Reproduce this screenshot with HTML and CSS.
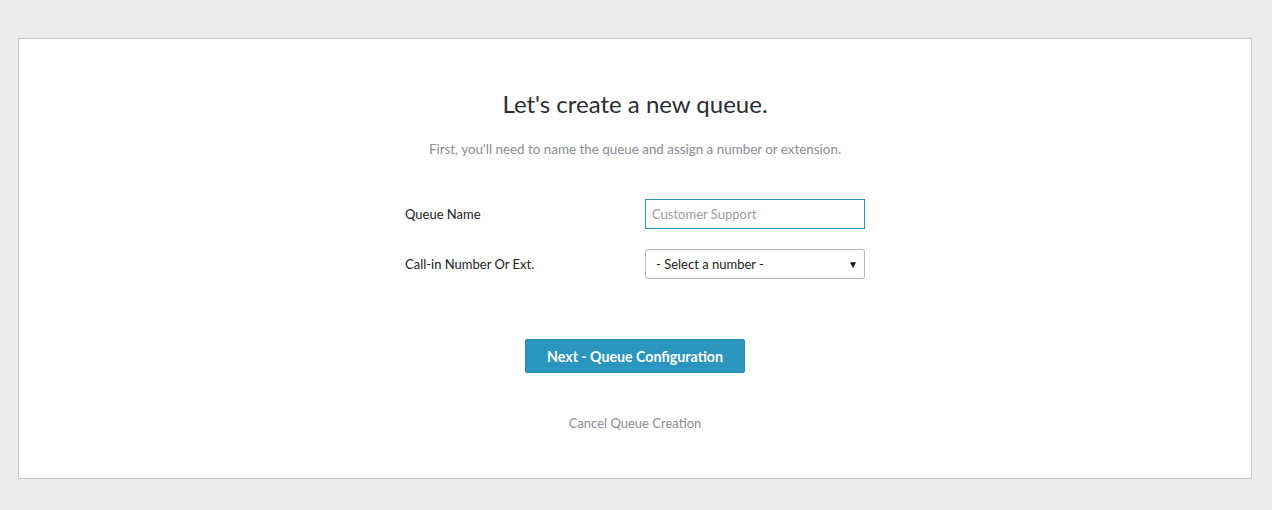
FILE: index.html
```html
<!DOCTYPE html>
<html lang="en">
<head>
<meta charset="utf-8">
<title>Create Queue</title>
<link rel="stylesheet" href="styles.css">
</head>
<body>
<div class="page">
  <div class="card">
    <h1 class="title">Let's create a new queue.</h1>
    <p class="subtitle">First, you'll need to name the queue and assign a number or extension.</p>
    <div class="form">
      <div class="row">
        <label class="label" for="qname">Queue Name</label>
        <input class="input" id="qname" type="text" placeholder="Customer Support">
      </div>
      <div class="row">
        <label class="label">Call-in Number Or Ext.</label>
        <div class="select">
          <span class="select-text">- Select a number -</span>
          <span class="select-arrow">▼</span>
        </div>
      </div>
    </div>
    <button class="btn" type="button">Next - Queue Configuration</button>
    <a class="cancel" href="#">Cancel Queue Creation</a>
  </div>
</div>
</body>
</html>
```
FILE: styles.css
```css
html, body {
  margin: 0;
  padding: 0;
  background: #ebebeb;
  font-family: Lato, "Open Sans", "Liberation Sans", sans-serif;
}
.page {
  padding: 38px 20px 31px 18px;
}
.card {
  background: #fff;
  border: 1px solid #c7c7cc;
  height: 439px;
  box-sizing: content-box;
  display: flex;
  flex-direction: column;
  align-items: center;
}
.title {
  margin: 50px 0 0;
  font-size: 24px;
  font-weight: 400;
  color: #2b2d33;
  line-height: 30px;
}
.subtitle {
  margin: 20px 0 0;
  font-size: 13.4px;
  color: #8a8d95;
  line-height: 20px;
}
.form {
  margin-top: 40px;
  width: 460px;
  display: flex;
  flex-direction: column;
  gap: 20px;
}
.row {
  display: flex;
  align-items: center;
  justify-content: space-between;
  height: 30px;
}
.label {
  font-size: 13px;
  color: #222;
}
.input {
  width: 220px;
  height: 30px;
  box-sizing: border-box;
  border: 1px solid #2a96c2;
  border-radius: 0;
  padding: 0 6px;
  font-family: inherit;
  font-size: 13px;
  color: #333;
  outline: none;
}
.input::placeholder {
  color: #9a9ca2;
}
.select {
  width: 220px;
  height: 30px;
  box-sizing: border-box;
  border: 1px solid #b8b8bc;
  border-radius: 3px;
  display: flex;
  align-items: center;
  justify-content: space-between;
  padding: 0 6px 0 10px;
  font-size: 13px;
  color: #222;
}
.select-arrow {
  font-size: 10px;
  color: #111;
}
.btn {
  margin-top: 60px;
  width: 220px;
  height: 34px;
  background: #2a96c0;
  border: 1px solid #2690bb;
  border-radius: 2px;
  color: #fff;
  font-family: inherit;
  font-size: 14.2px;
  font-weight: 700;
  padding: 0;
}
.cancel {
  margin-top: 42px;
  font-size: 13px;
  color: #8a8d95;
  text-decoration: none;
}
```
